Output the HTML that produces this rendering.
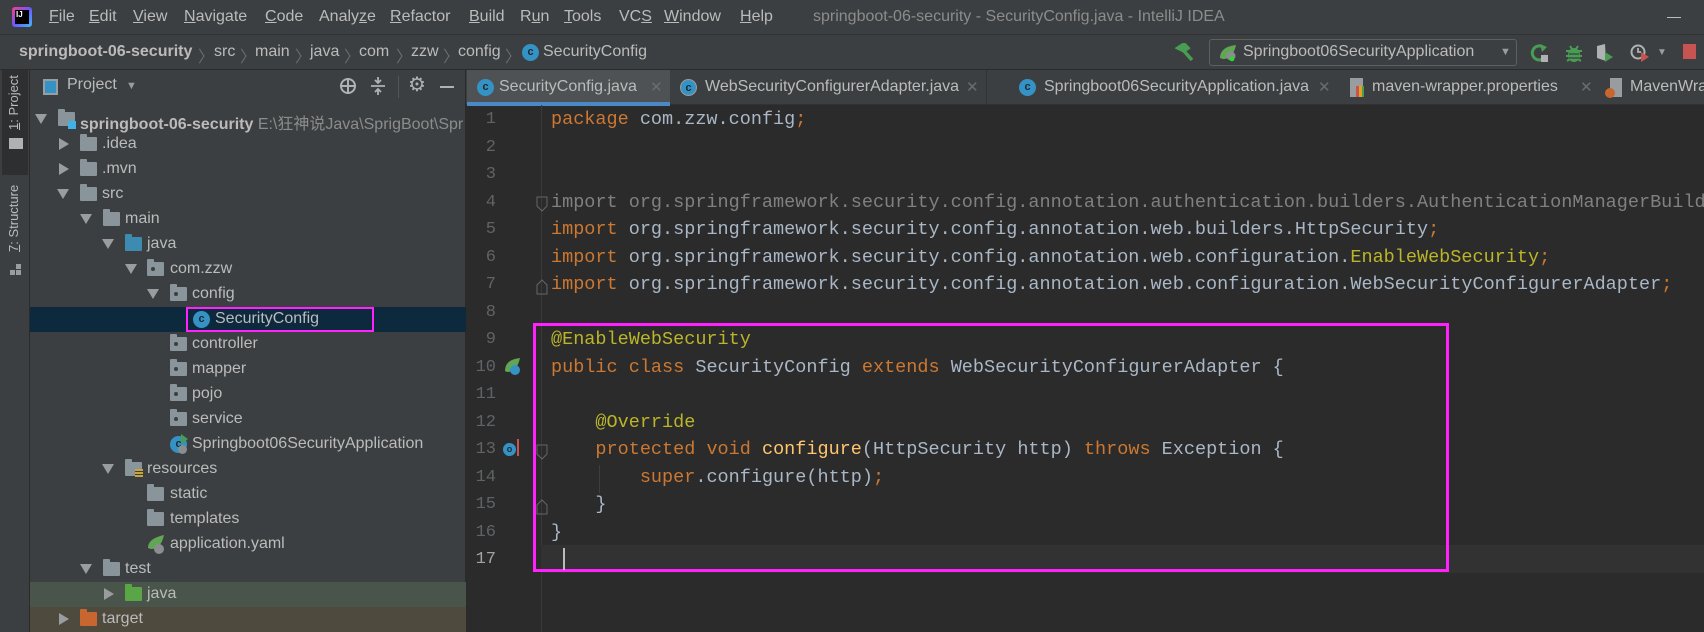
<!DOCTYPE html>
<html><head><meta charset="utf-8">
<style>
*{margin:0;padding:0;box-sizing:border-box}
body{width:1704px;height:632px;overflow:hidden;background:#2b2b2b;font-family:"Liberation Sans","Noto Sans CJK SC",sans-serif;color:#bbb;position:relative}
.a{position:absolute;white-space:nowrap}
.menu{top:0;left:0;width:1704px;height:35px;background:#3c3f41;border-bottom:1px solid #323232}
.menu span{position:absolute;top:8px;font-size:16px;color:#bbb}
.menu u{text-decoration:underline}
.bc{top:35px;left:0;width:1704px;height:35px;background:#3c3f41;border-bottom:1px solid #2b2b2b}
.bc span{position:absolute;top:8px;font-size:16px;color:#bbb}
.bc .sep{color:#6c6c6c}
.ci{position:absolute;width:17px;height:17px;border-radius:50%;background:#3592c4;color:#1d2a33;font-size:11px;font-weight:bold;text-align:center;line-height:17px;font-family:"Liberation Sans",sans-serif}
.stripe{top:70px;left:0;width:30px;height:562px;background:#3c3f41;border-right:1px solid #2b2b2b}
.proj{top:70px;left:30px;width:436px;height:562px;background:#3c3f41;border-right:1px solid #2b2b2b}
.row{position:absolute;left:0;width:436px;height:25px}
.row .t{position:absolute;top:3px;font-size:16px;color:#bbb;white-space:nowrap}
.arr{position:absolute;top:7px;width:0;height:0}
.arr.d{border-left:6px solid transparent;border-right:6px solid transparent;border-top:10px solid #9a9da0}
.arr.r{border-top:6px solid transparent;border-bottom:6px solid transparent;border-left:10px solid #9a9da0;top:6px}
.fold{position:absolute;top:5px;width:17px;height:14px;background:#8a949b;border-radius:1px}
.fold:before{content:"";position:absolute;left:0;top:-3px;width:7px;height:4px;background:inherit;border-radius:1px 1px 0 0}
.fold.p:after{content:"";position:absolute;left:4px;top:5px;width:4px;height:4px;background:#3c3f41;border-radius:50%}
.tabs{top:70px;left:466px;width:1238px;height:35px;background:#3c3f41;border-bottom:1px solid #323232}
.tab{position:absolute;top:0;height:35px}
.tab .t{position:absolute;top:8px;font-size:16px;color:#bbb;white-space:nowrap}
.tab .x{position:absolute;top:8px;font-size:15px;color:#6c6c6c}
.code{font-family:"Liberation Mono",monospace;font-size:18.5px;line-height:27.5px}
pre.code{white-space:pre}
.k{color:#cc7832}.n{color:#a9b7c6}.an{color:#bbb529}.m{color:#ffc66d}.g{color:#808080}
</style></head><body>

<div class="a menu">
 <div class="a" style="left:12px;top:7px;width:20px;height:20px;background:linear-gradient(135deg,#fc3b8c,#6b57ff,#3bbdf5);border-radius:3px"></div>
 <div class="a" style="left:15px;top:10px;width:14px;height:14px;background:#000"></div>
 <div class="a" style="left:16px;top:10px;font-size:8px;color:#fff;font-weight:bold">IJ</div>
 <span style="left:49px"><u>F</u>ile</span><span style="left:89px"><u>E</u>dit</span><span style="left:133px"><u>V</u>iew</span><span style="left:184px"><u>N</u>avigate</span><span style="left:265px"><u>C</u>ode</span><span style="left:319px">Analy<u>z</u>e</span><span style="left:390px"><u>R</u>efactor</span><span style="left:469px"><u>B</u>uild</span><span style="left:520px">R<u>u</u>n</span><span style="left:564px"><u>T</u>ools</span><span style="left:619px">VC<u>S</u></span><span style="left:664px"><u>W</u>indow</span><span style="left:740px"><u>H</u>elp</span>
 <span style="left:813px;color:#8c8c8c">springboot-06-security - SecurityConfig.java - IntelliJ IDEA</span>
 <div class="a" style="left:1667px;top:17px;width:14px;height:1px;background:#bbb"></div>
</div>

<div class="a bc">
 <span style="left:19px;font-weight:bold">springboot-06-security</span>
 <span class="sep" style="left:198px">〉</span><span style="left:214px">src</span>
 <span class="sep" style="left:240px">〉</span><span style="left:255px">main</span>
 <span class="sep" style="left:295px">〉</span><span style="left:310px">java</span>
 <span class="sep" style="left:344px">〉</span><span style="left:359px">com</span>
 <span class="sep" style="left:396px">〉</span><span style="left:411px">zzw</span>
 <span class="sep" style="left:443px">〉</span><span style="left:458px">config</span>
 <span class="sep" style="left:505px">〉</span>
 <div class="ci" style="left:522px;top:9px">c</div>
 <span style="left:543px">SecurityConfig</span>
 <svg class="a" style="left:1175px;top:8px" width="20" height="20"><path d="M3 5 L9 1 L13 5 L9 8 Z M8 7 L17 17" stroke="#499c54" stroke-width="3.5" fill="#499c54"/></svg>
 <div class="a" style="left:1209px;top:4px;width:308px;height:27px;border:1px solid #5e6060;border-radius:3px;background:#3c3f41"></div>
 <svg class="a" style="left:1218px;top:9px" width="20" height="18"><path d="M2 14 C2 5 10 2 18 1 C16 10 12 15 5 15 Z" fill="#62a655"/><circle cx="13" cy="12" r="4.5" fill="#8a8e91"/><circle cx="14" cy="15" r="2.3" fill="#1ee61e"/></svg>
 <span style="left:1243px">Springboot06SecurityApplication</span>
 <span style="left:1500px;font-size:11px;top:11px;color:#9a9da0">▼</span>
 <svg class="a" style="left:1530px;top:8px" width="20" height="20"><path d="M13 4 A7 7 0 1 0 16 12" stroke="#499c54" stroke-width="3" fill="none"/><path d="M10 1 L17 4 L12 9Z" fill="#499c54"/><rect x="11" y="12" width="7" height="7" fill="#afb1b3"/></svg>
 <svg class="a" style="left:1565px;top:8px" width="18" height="20"><ellipse cx="9" cy="12" rx="6" ry="7" fill="#499c54"/><path d="M1 8h16M1 13h16M2 18l3-2M16 18l-3-2M5 3l2 3M13 3l-2 3" stroke="#499c54" stroke-width="2"/><path d="M4 11h10M4 15h10" stroke="#3c3f41" stroke-width="1.3"/></svg>
 <svg class="a" style="left:1595px;top:8px" width="20" height="20"><path d="M2 3 L10 1 L11 18 L2 15 Z" fill="#afb1b3"/><path d="M10 9 L18 14 L10 19Z" fill="#499c54"/></svg>
 <svg class="a" style="left:1630px;top:8px" width="22" height="20"><circle cx="8" cy="9" r="6.5" stroke="#afb1b3" stroke-width="2" fill="none"/><path d="M8 5v4h3" stroke="#afb1b3" stroke-width="1.8" fill="none"/><path d="M11 9 L19 14 L11 19Z" fill="#c75450"/></svg>
 <span style="left:1657px;font-size:10px;top:12px;color:#9a9da0">▼</span>
 <div class="a" style="left:1683px;top:9px;width:13px;height:15px;background:#c75450"></div>
</div>

<div class="a stripe">
 <div class="a" style="left:2px;top:0;width:26px;height:105px;background:#2d2f30"></div>
 <div class="a" style="left:6px;top:60px;transform:rotate(-90deg);transform-origin:0 0;font-size:13px;color:#bbb"><u>1</u>: Project</div>
 <div class="a" style="left:9px;top:68px;width:14px;height:11px;background:#afb1b3"></div>
 <div class="a" style="left:6px;top:182px;transform:rotate(-90deg);transform-origin:0 0;font-size:13px;color:#bbb"><u>7</u>: Structure</div>
 <div class="a" style="left:10px;top:200px;width:5px;height:5px;background:#9a9da0"></div>
 <div class="a" style="left:16px;top:200px;width:5px;height:5px;background:#9a9da0"></div>
 <div class="a" style="left:16px;top:194px;width:5px;height:5px;background:#9a9da0"></div>
</div>

<div class="a proj">
 <div class="a" style="left:13px;top:9px;width:15px;height:16px;border:2px solid #9a9da0;background:#3592c4"></div>
 <div class="a" style="left:37px;top:6px;font-size:16px;color:#bbb">Project</div>
 <div class="a" style="left:96px;top:10px;font-size:11px;color:#9a9da0">▼</div>
 <svg class="a" style="left:308px;top:6px" width="20" height="20"><circle cx="10" cy="10" r="7" stroke="#afb1b3" stroke-width="2" fill="none"/><path d="M10 2v16M2 10h16" stroke="#afb1b3" stroke-width="2"/></svg>
 <svg class="a" style="left:339px;top:6px" width="18" height="20"><path d="M2 10h14M9 1v6M6 4l3 3 3-3M9 19v-6M6 16l3-3 3 3" stroke="#afb1b3" stroke-width="1.8" fill="none"/></svg>
 <div class="a" style="left:368px;top:6px;width:1px;height:22px;background:#555"></div>
 <div class="a" style="left:378px;top:2px;font-size:20px;color:#afb1b3">⚙</div>
 <div class="a" style="left:410px;top:16px;width:14px;height:2px;background:#afb1b3"></div>

 <div style="position:absolute;left:0;top:37px;width:436px">
  <div class="row" style="top:0"><div class="arr d" style="left:5px"></div><div class="fold" style="left:28px;background:#8a949b"></div><div class="a" style="left:38px;top:14px;width:8px;height:8px;background:#3fb1e5"></div><div class="t" style="left:50px"><b>springboot-06-security</b> <span style="color:#8c8c8c">E:\狂神说Java\SprigBoot\Spr</span></div></div>
  <div class="row" style="top:25px"><div class="arr r" style="left:29px"></div><div class="fold" style="left:50px"></div><div class="t" style="left:72px">.idea</div></div>
  <div class="row" style="top:50px"><div class="arr r" style="left:29px"></div><div class="fold" style="left:50px"></div><div class="t" style="left:72px">.mvn</div></div>
  <div class="row" style="top:75px"><div class="arr d" style="left:27px"></div><div class="fold" style="left:50px"></div><div class="t" style="left:72px">src</div></div>
  <div class="row" style="top:100px"><div class="arr d" style="left:50px"></div><div class="fold" style="left:73px"></div><div class="t" style="left:95px">main</div></div>
  <div class="row" style="top:125px"><div class="arr d" style="left:72px"></div><div class="fold" style="left:95px;background:#3d8bb0"></div><div class="t" style="left:117px">java</div></div>
  <div class="row" style="top:150px"><div class="arr d" style="left:95px"></div><div class="fold p" style="left:117px"></div><div class="t" style="left:140px">com.zzw</div></div>
  <div class="row" style="top:175px"><div class="arr d" style="left:117px"></div><div class="fold p" style="left:140px"></div><div class="t" style="left:162px">config</div></div>
  <div class="row" style="top:200px;background:#0d293e"><div class="ci" style="left:163px;top:4px">c</div><div class="t" style="left:185px">SecurityConfig</div><div class="a" style="left:156px;top:0;width:188px;height:25px;border:2px solid #ff22ff"></div></div>
  <div class="row" style="top:225px"><div class="fold p" style="left:140px"></div><div class="t" style="left:162px">controller</div></div>
  <div class="row" style="top:250px"><div class="fold p" style="left:140px"></div><div class="t" style="left:162px">mapper</div></div>
  <div class="row" style="top:275px"><div class="fold p" style="left:140px"></div><div class="t" style="left:162px">pojo</div></div>
  <div class="row" style="top:300px"><div class="fold p" style="left:140px"></div><div class="t" style="left:162px">service</div></div>
  <div class="row" style="top:325px"><div class="ci" style="left:140px;top:4px">c</div><div class="a" style="left:151px;top:2px;width:0;height:0;border-top:5px solid transparent;border-bottom:5px solid transparent;border-left:7px solid #499c54"></div><div class="a" style="left:148px;top:13px;width:9px;height:9px;border-radius:50%;background:#8a8e91"></div><div class="t" style="left:162px">Springboot06SecurityApplication</div></div>
  <div class="row" style="top:350px"><div class="arr d" style="left:72px"></div><div class="fold" style="left:95px"></div><div class="a" style="left:105px;top:12px;width:8px;height:9px;background:repeating-linear-gradient(#c9a43b 0 2px,#3c3f41 2px 3px)"></div><div class="t" style="left:117px">resources</div></div>
  <div class="row" style="top:375px"><div class="fold" style="left:117px"></div><div class="t" style="left:140px">static</div></div>
  <div class="row" style="top:400px"><div class="fold" style="left:117px"></div><div class="t" style="left:140px">templates</div></div>
  <div class="row" style="top:425px"><svg class="a" style="left:117px;top:2px" width="20" height="22"><path d="M1 14 C1 6 9 3 17 1 C15 10 11 15 4 15 Z" fill="#62a655"/><circle cx="12" cy="15" r="5" fill="#8a8e91"/></svg><div class="t" style="left:140px">application.yaml</div></div>
  <div class="row" style="top:450px"><div class="arr d" style="left:50px"></div><div class="fold" style="left:73px"></div><div class="t" style="left:95px">test</div></div>
  <div class="row" style="top:475px;background:#49544a"><div class="arr r" style="left:74px"></div><div class="fold" style="left:95px;background:#5aa647"></div><div class="t" style="left:117px">java</div></div>
  <div class="row" style="top:500px;background:#4e4a3e"><div class="arr r" style="left:29px"></div><div class="fold" style="left:50px;background:#c8662f"></div><div class="t" style="left:72px">target</div></div>
 </div>
</div>

<div class="a tabs">
 <div class="tab" style="left:1px;width:203px;background:#4e5254"><div class="ci" style="left:10px;top:9px">c</div><div class="t" style="left:32px">SecurityConfig.java</div><div class="x" style="left:183px">✕</div><div class="a" style="left:0;top:32px;width:203px;height:4px;background:#4a88c7"></div></div>
 <div class="tab" style="left:204px;width:317px;border-right:1px solid #323232"><div class="ci" style="left:10px;top:9px;border:1px solid #9a9da0">c</div><div class="t" style="left:35px">WebSecurityConfigurerAdapter.java</div><div class="x" style="left:296px">✕</div></div>
 <div class="tab" style="left:540px;width:330px"><div class="ci" style="left:13px;top:9px">c</div><div class="t" style="left:38px">Springboot06SecurityApplication.java</div><div class="x" style="left:312px">✕</div></div>
 <div class="tab" style="left:870px;width:260px"><div class="a" style="left:14px;top:8px;width:13px;height:19px;background:#9a9da0"></div><div class="a" style="left:20px;top:16px;width:8px;height:11px;background:linear-gradient(90deg,#c75450 0 3px,#e6a21b 3px 6px,#499c54 6px)"></div><div class="t" style="left:36px">maven-wrapper.properties</div><div class="x" style="left:244px">✕</div></div>
 <div class="tab" style="left:1130px;width:120px"><div class="a" style="left:14px;top:8px;width:12px;height:19px;background:#9a9da0"></div><div class="a" style="left:9px;top:18px;width:10px;height:10px;border-radius:50%;background:#c8662f"></div><div class="t" style="left:34px">MavenWra</div></div>
</div>

<div class="a" style="left:541px;top:105px;width:1px;height:527px;background:#3a3a3a"></div>
<div class="a" style="left:541px;top:545px;width:1163px;height:28px;background:#323232"></div>
<div class="a" style="left:533px;top:323px;width:916px;height:249px;border:3px solid #ff22ff"></div>
<div class="a" style="left:563px;top:548px;width:2px;height:22px;background:#bbb"></div>

<div class="a code" style="left:466px;top:106px;width:30px;text-align:right;color:#606366;font-size:17px">
1<br>2<br>3<br>4<br>5<br>6<br>7<br>8<br>9<br>10<br>11<br>12<br>13<br>14<br>15<br>16<br><span style="color:#a4a3a3">17</span>
</div>

<svg class="a" style="left:503px;top:357px" width="20" height="20"><path d="M2 14 C2 5 9 2 17 1 C15 10 11 15 4 15 Z" fill="#62a655"/><circle cx="12" cy="13" r="5" fill="#3592c4"/></svg>
<div class="a" style="left:503px;top:443px;width:13px;height:13px;border-radius:50%;background:#3592c4;color:#1d2a33;font-size:9px;font-weight:bold;text-align:center;line-height:13px">o</div>
<div class="a" style="left:517px;top:439px;width:2px;height:17px;background:#c75450"></div>
<svg class="a" style="left:536px;top:196px" width="12" height="16"><path d="M1 1h10v9l-5 5-5-5z" stroke="#666" fill="none"/></svg>
<svg class="a" style="left:536px;top:279px" width="12" height="16"><path d="M1 15h10V6L6 1 1 6z" stroke="#666" fill="none"/></svg>
<svg class="a" style="left:536px;top:444px" width="12" height="16"><path d="M1 1h10v9l-5 5-5-5z" stroke="#666" fill="none"/></svg>
<svg class="a" style="left:536px;top:499px" width="12" height="16"><path d="M1 15h10V6L6 1 1 6z" stroke="#666" fill="none"/></svg>
<div class="a" style="left:599px;top:465px;width:1px;height:28px;background:#3e3e3e"></div>

<pre class="a code n" style="left:551px;top:106px;white-space:pre"><span class="k">package</span> com.zzw.config<span class="k">;</span>


<span class="g">import org.springframework.security.config.annotation.authentication.builders.AuthenticationManagerBuilder;</span>
<span class="k">import</span> org.springframework.security.config.annotation.web.builders.HttpSecurity<span class="k">;</span>
<span class="k">import</span> org.springframework.security.config.annotation.web.configuration.<span class="an">EnableWebSecurity</span><span class="k">;</span>
<span class="k">import</span> org.springframework.security.config.annotation.web.configuration.WebSecurityConfigurerAdapter<span class="k">;</span>

<span class="an">@EnableWebSecurity</span>
<span class="k">public class</span> SecurityConfig <span class="k">extends</span> WebSecurityConfigurerAdapter {

    <span class="an">@Override</span>
    <span class="k">protected void</span> <span class="m">configure</span>(HttpSecurity http) <span class="k">throws</span> Exception {
        <span class="k">super</span>.configure(http)<span class="k">;</span>
    }
}
</pre>
</body></html>
